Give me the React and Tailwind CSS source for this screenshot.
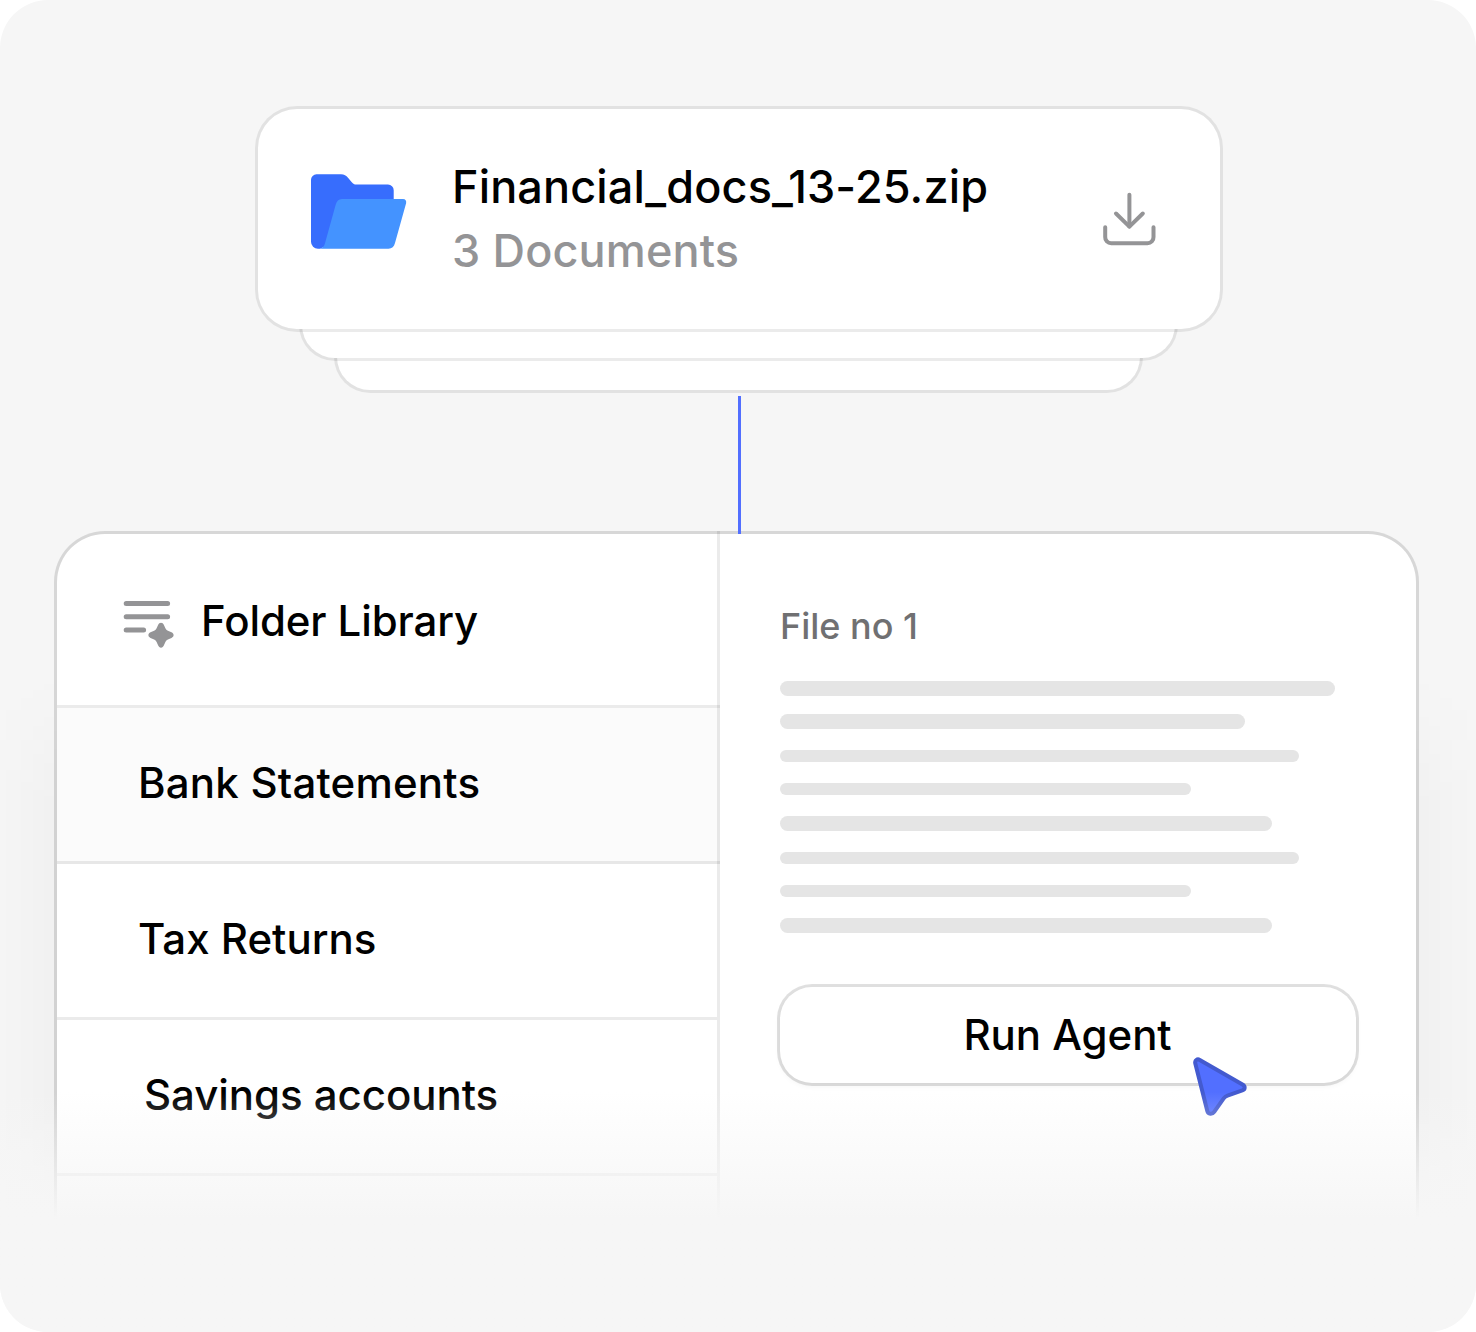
const folders = [
  { name: "Bank Statements", className: "-mr-[3px] bg-black/[1.6%] pl-[81px] tracking-[0.2px]" },
  { name: "Tax Returns", className: "pl-[81px]" },
  { name: "Savings accounts", className: "pl-[87px] tracking-[-0.05px]" },
];

const lines = [
  "w-[555px] h-[15px]",
  "w-[465px] h-[15px] mt-[18px]",
  "w-[519px] h-[12px] mt-[21px]",
  "w-[411px] h-[12px] mt-[21px]",
  "w-[492px] h-[15px] mt-[21px]",
  "w-[519px] h-[12px] mt-[21px]",
  "w-[411px] h-[12px] mt-[21px]",
  "w-[492px] h-[15px] mt-[21px]",
];

function FolderIcon() {
  return (
    <svg className="shrink-0" width="96" height="75" viewBox="0 0 96 75" fill="none">
      <path
        d="M5.5.3H30c3.2 0 5.2 1.2 7 3.4l3.8 4.5c1.3 1.6 2.6 2.3 4.6 2.3H77a5.7 5.7 0 0 1 5.7 5.7V40L9 74.7H7a7 7 0 0 1-7-7V5.8A5.5 5.5 0 0 1 5.5.3Z"
        fill="#376DFD"
      />
      <path
        d="M31 25h61c2.4 0 3.7 1.9 3.1 4.3L84 69c-1 3.7-3 5.7-6.5 5.7H7c4 0 6-1.9 7-5.5L24.6 31c1-3.9 3-6 6.4-6Z"
        fill="#4493FF"
      />
    </svg>
  );
}

function DownloadIcon() {
  return (
    <svg
      className="shrink-0"
      width="56"
      height="56"
      viewBox="0 0 56 56"
      fill="none"
      stroke="#949496"
      strokeWidth="4"
      strokeLinecap="round"
      strokeLinejoin="round"
    >
      <path d="M28.4 3.8V35.6" />
      <path d="M15 22.5 28.4 35.6 41.8 22.5" />
      <path d="M4.2 36.2V46a6 6 0 0 0 6 6.3h36.3a6 6 0 0 0 6-6.3v-9.8" />
    </svg>
  );
}

function ListIcon() {
  return (
    <svg className="shrink-0" width="51" height="48" viewBox="0 0 51 48" fill="none">
      <path d="M3.2 3.4H44.6M3.2 16.7H44.6M3.2 30H20.6" stroke="#949496" strokeWidth="5" strokeLinecap="round" />
      <path
        d="M38 22.7c1.3 0 2.3.8 2.8 2l1.6 3.6c.6 1.3 1.2 1.9 2.5 2.5l3.6 1.5c1.3.6 2.1 1.5 2.1 2.8s-.8 2.2-2.1 2.8l-3.6 1.5c-1.3.6-1.9 1.2-2.5 2.5l-1.6 3.7c-.5 1.2-1.5 2.1-2.8 2.1s-2.3-.9-2.8-2.1l-1.6-3.7c-.6-1.3-1.2-1.9-2.5-2.5l-3.6-1.5c-1.3-.6-2.1-1.5-2.1-2.8s.8-2.2 2.1-2.8l3.6-1.5c1.3-.6 1.9-1.2 2.5-2.5l1.6-3.6c.5-1.2 1.5-2 2.8-2Z"
        fill="#949496"
      />
    </svg>
  );
}

function Cursor() {
  return (
    <svg className="absolute top-[1055px] left-[1190px] z-20" width="60" height="64" viewBox="0 0 60 64" fill="none">
      <path
        d="M9.8 4.9 52.5 29.6C55.6 31.4 55.2 34.3 52.3 35.4L37.5 40.6C35.8 41.2 34.8 41.9 33.7 43.4L24.2 56.9C22.2 59.7 18.2 59.3 17.3 56L5.3 8.6C4.6 5.4 7.2 3.5 9.8 4.9Z"
        fill="#526FFF"
        stroke="#435ACF"
        strokeWidth="4"
        strokeLinejoin="round"
      />
    </svg>
  );
}

export default function App() {
  return (
    <div className="bg-white font-['Inter',sans-serif] font-medium text-black">
      <div className="relative flex h-[1332px] w-[1476px] flex-col items-start overflow-hidden rounded-[48px] bg-[#f6f6f6]">
        {/* Stack of documents */}
        <div className="relative z-20 mt-[106px] ml-[255px] flex h-[226px] w-[968px] items-start rounded-[42px] border-[3px] border-black/8 bg-white bg-clip-padding pt-[46px] pl-[53px]">
          <div className="pt-[19px]">
            <FolderIcon />
          </div>
          <div className="ml-[45px] w-[649px] text-[45px] leading-[64px] whitespace-nowrap">
            <div className="tracking-[0.14px]">Financial_docs_13-25.zip</div>
            <div className="tracking-[0.15px] text-[#949496]">3 Documents</div>
          </div>
          <div className="pt-[36px]">
            <DownloadIcon />
          </div>
        </div>
        <div className="relative z-10 -mt-[42px] ml-[299px] h-[71px] w-[879px] rounded-b-[36px] border-[3px] border-t-0 border-black/8 bg-white bg-clip-padding"></div>
        <div className="-mt-[42px] ml-[334px] h-[74px] w-[809px] rounded-b-[36px] border-[3px] border-t-0 border-black/8 bg-white bg-clip-padding"></div>

        {/* Connector */}
        <div className="relative z-20 mt-[3px] ml-[738px] h-[138px] w-[3px] shrink-0 bg-[#526fff]"></div>

        {/* Soft shadow under the panel */}
        <div className="absolute top-[740px] left-[54px] h-[440px] w-[1365px] bg-black/[4.5%] blur-[45px]"></div>

        {/* Library panel */}
        <div className="relative z-10 ml-[57px] flex h-[760px] w-[1359px] shrink-0 rounded-t-[48px] bg-white shadow-[0_0_0_3px_rgba(0,0,0,0.125)]">
          <div className="-mt-[3px] w-[663px] border-r-[3px] border-black/8 pt-[3px]">
            <div className="-mr-[3px] flex h-[174px] items-center border-b-[3px] border-black/8 pl-[66px]">
              <div className="pt-[9px]">
                <ListIcon />
              </div>
              <div className="ml-[27px] pt-[2px] text-[42px] leading-[52px] tracking-[-0.1px]">Folder Library</div>
            </div>
            {folders.map((folder) => (
              <div
                key={folder.name}
                className={`flex h-[156px] items-center border-b-[3px] border-black/8 pb-[4px] text-[42px] leading-[52px] ${folder.className}`}
              >
                {folder.name}
              </div>
            ))}
          </div>
          <div className="flex flex-col items-start pt-[68px] pl-[60px]">
            <div className="text-[36px] leading-[48px] text-[#707072]">File no 1</div>
            <div className="mt-[31px]">
              {lines.map((line, i) => (
                <div key={i} className={`rounded-full bg-[#e5e5e5] ${line}`}></div>
              ))}
            </div>
            <button className="mt-[54px] h-[96px] w-[576px] rounded-[32px] bg-white pr-[1px] text-[42px] leading-[52px] tracking-[-0.05px] shadow-[0_0_0_3px_rgba(0,0,0,0.12),0_3px_6px_rgba(0,0,0,0.05)]">
              Run Agent
            </button>
          </div>
        </div>

        <Cursor />

        {/* Bottom fade */}
        <div className="absolute inset-x-0 top-[1092px] bottom-0 z-30 bg-linear-to-b from-[#f6f6f6]/0 to-[#f6f6f6] to-[127px]"></div>
      </div>
    </div>
  );
}
